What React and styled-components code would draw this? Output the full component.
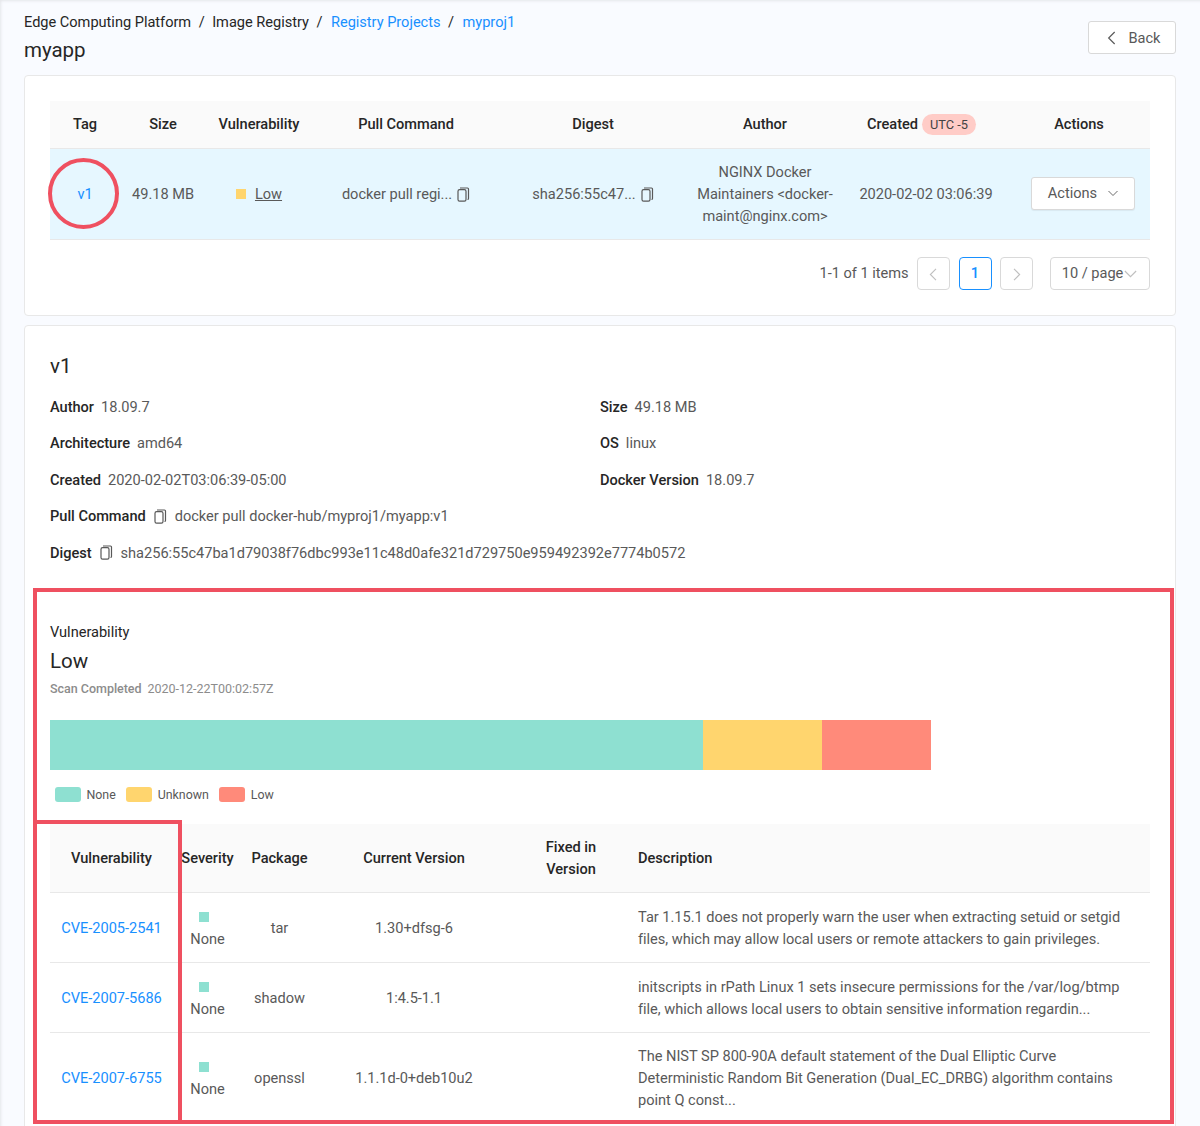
import React from "react";
import styled, { createGlobalStyle, css } from "styled-components";

const GlobalStyle = createGlobalStyle`
  html, body {
    margin: 0;
    padding: 0;
    height: 1126px;
    overflow: hidden;
    background: #f9fbff;
  }
  * { box-sizing: border-box; }
`;

const Page = styled.div`
  width: 1200px;
  height: 1126px;
  overflow: hidden;
  padding: 12px 24px 0;
  font-family: Roboto, "Liberation Sans", sans-serif;
  font-size: 14.6px;
  letter-spacing: -0.02px;
  color: #595959;
  background: #f9fbff;
  box-shadow: inset 2px 2px 3px -1px #e4e6ea;
`;

const Header = styled.div`
  display: flex;
  justify-content: space-between;
  height: 63px;
`;

const Crumbs = styled.div`
  display: flex;
  align-items: center;
  height: 20px;
  color: #262626;
`;

const Crumb = styled.span`
  color: ${(p) => (p.$link ? "#1890ff" : "#262626")};
  margin-left: ${(p) => (p.$link ? "1px" : "0")};
`;

const Slash = styled.span`
  margin: 0 7.5px;
`;

const Title = styled.h1`
  margin: 4px 0 0;
  font-size: 20.5px;
  font-weight: 400;
  line-height: 28px;
  color: #262626;
`;

const outlined = css`
  display: flex;
  align-items: center;
  justify-content: center;
  background: #fff;
  border: 1px solid #d9d9d9;
  border-radius: 3px;
  font-family: inherit;
  font-size: 14.6px;
  letter-spacing: -0.02px;
  color: #595959;
  padding: 0;
`;

const BackButton = styled.button`
  ${outlined}
  width: 88px;
  height: 33px;
  margin-top: 9px;
  gap: 9px;
`;

const Card = styled.section`
  background: #fff;
  border: 1px solid #e8e8e8;
  border-radius: 4px;
`;

const TagsCard = styled(Card)`
  height: 241px;
  padding: 25px 25px 0;
  margin-bottom: 9px;
`;

const DetailCard = styled(Card)`
  padding: 25px 25px 0;
  height: 900px;
`;

const Table = styled.table`
  width: 100%;
  border-collapse: collapse;
  table-layout: fixed;
`;

const Th = styled.th`
  background: #fafafa;
  border-bottom: 1px solid #e8e8e8;
  color: #262626;
  font-weight: 500;
  text-align: ${(p) => p.$align || "center"};
  padding: ${(p) => p.$pad || "0"};
  height: ${(p) => p.$h || "47px"};
  line-height: 22px;
  white-space: nowrap;
  overflow: visible;
`;

const Td = styled.td`
  text-align: ${(p) => p.$align || "center"};
  padding: ${(p) => p.$pad || "0"};
  background: ${(p) => p.$bg || "transparent"};
  border-bottom: 1px solid #e8e8e8;
  height: ${(p) => p.$h || "auto"};
  line-height: 22px;
  vertical-align: middle;
`;

const HighlightTd = styled(Td).attrs({ $bg: "#e6f7ff", $pad: "1px 0 0" })``;

const TagCell = styled.div`
  position: relative;
`;

const TagCircle = styled.div`
  position: absolute;
  left: -2px;
  top: -25px;
  width: 71px;
  height: 71px;
  border: 4px solid #ef5060;
  border-radius: 50%;
  pointer-events: none;
`;

const Link = styled.span`
  color: #1890ff;
`;

const UtcBadge = styled.span`
  display: inline-block;
  margin-left: 4px;
  padding: 0 8px;
  height: 21px;
  line-height: 21px;
  border-radius: 11px;
  background: #ffccc7;
  color: #434343;
  font-size: 12.8px;
  font-weight: 400;
`;

const Severity = styled.span`
  display: inline-flex;
  align-items: center;
  gap: 9px;
`;

const Square = styled.span`
  display: block;
  width: 10px;
  height: 10px;
  background: ${(p) => p.$color};
`;

const Underlined = styled.span`
  text-decoration: underline;
`;

const Copyable = styled.span`
  display: inline-flex;
  align-items: center;
  justify-content: center;
  gap: 5px;
`;

const ActionsButton = styled.button`
  ${outlined}
  width: 104px;
  height: 33px;
  margin: 0 auto;
  padding: 0 0 0 1px;
  gap: 10px;
  box-shadow: 0 1px 1px rgba(0, 0, 0, 0.06);
  transform: translate(4px, -1px);
`;

const Pager = styled.div`
  display: flex;
  justify-content: flex-end;
  align-items: center;
  margin-top: 17px;
  height: 33px;
`;

const PagerTotal = styled.span`
  margin-right: 8.5px;
`;

const PageBox = styled.button`
  ${outlined}
  width: 33px;
  height: 33px;
  margin-right: 8.5px;
  border-radius: 4px;
  color: #bfbfbf;
  svg {
    margin-top: 2px;
  }
  ${(p) =>
    p.$active &&
    css`
      border-color: #1890ff;
      color: #1890ff;
      font-weight: 500;
    `}
`;

const SizeSelect = styled.div`
  ${outlined}
  width: 100px;
  height: 33px;
  margin-left: 8.5px;
  border-radius: 4px;
`;

const DetailTitle = styled.h2`
  margin: 1px 0 16px;
  font-size: 20.5px;
  line-height: 28px;
  font-weight: 400;
  color: #262626;
`;

const InfoGrid = styled.div`
  display: grid;
  grid-template-columns: 550px 1fr;
  row-gap: 15px;
`;

const InfoRow = styled.div`
  display: flex;
  align-items: center;
  height: 21.5px;
  grid-column: ${(p) => (p.$wide ? "1 / -1" : "auto")};
  gap: ${(p) => (p.$wide ? "8px" : "7px")};
`;

const InfoLabel = styled.span`
  color: #262626;
  font-weight: 500;
`;

const VulnSection = styled.div`
  position: relative;
  margin-top: 27px;
  padding-top: 30px;
`;

const VulnFrame = styled.div`
  position: absolute;
  left: -17px;
  top: -3px;
  width: 1141px;
  height: 536px;
  border: 4px solid #ef5060;
  pointer-events: none;
`;

const ColumnFrame = styled.div`
  position: absolute;
  left: -17px;
  top: 229px;
  width: 149px;
  height: 304px;
  border: 4px solid #ef5060;
  pointer-events: none;
`;

const VulnLabel = styled.div`
  color: #262626;
  line-height: 22px;
`;

const VulnLevel = styled.div`
  margin-top: 4px;
  color: #262626;
  font-size: 20.5px;
  line-height: 28px;
`;

const ScanLine = styled.div`
  display: flex;
  gap: 6px;
  margin-top: 5px;
  font-size: 12.5px;
  line-height: 18px;
  color: #8c8c8c;
`;

const ScanLabel = styled.span`
  font-weight: 500;
`;

const Bar = styled.div`
  display: flex;
  width: 881px;
  height: 50px;
  margin-top: 22px;
`;

const BarPart = styled.div`
  background: ${(p) => p.$color};
`;

const Legend = styled.div`
  display: flex;
  align-items: center;
  height: 18px;
  margin: 16px 0 20px 5px;
  gap: 10.5px;
  font-size: 12.4px;
  color: #595959;
`;

const LegendItem = styled.span`
  display: flex;
  align-items: center;
  gap: 5.5px;
`;

const Swatch = styled.span`
  width: 26px;
  height: 15px;
  border-radius: 3px;
  background: ${(p) => p.$color};
`;

const SeverityStack = styled.div`
  display: flex;
  flex-direction: column;
  align-items: center;
`;

const SeverityMark = styled(Square)`
  margin: 6px 8px 6px 0;
`;

const Chevron = ({ dir = "down", size = 12, color = "#595959" }) => {
  const d = {
    down: "M1.5 4l4.5 4.5L10.5 4",
    left: "M8 1.5L3.5 6 8 10.5",
    right: "M4 1.5L8.5 6 4 10.5",
  }[dir];
  return (
    <svg width={size} height={size} viewBox="0 0 12 12" fill="none" stroke={color} strokeWidth="0.9">
      <path d={d} />
    </svg>
  );
};

const CopyIcon = () => (
  <svg width="13" height="15" viewBox="0 0 13 15" fill="none" stroke="#595959" strokeWidth="1.2">
    <path d="M3 1h7.5a1 1 0 0 1 1 1v9.5a1 1 0 0 1-1 1" />
    <rect x="1" y="2.6" width="8" height="11.6" rx="1.6" />
  </svg>
);

const COLORS = { none: "#8ee0d1", unknown: "#ffd56e", low: "#ff8a7a" };

const tagCols = [70, 86, 106, 188, 186, 158, 164, 142];
const vulnCols = [123, 69, 75, 194, 120, 519];

const vulns = [
  {
    id: "CVE-2005-2541",
    pkg: "tar",
    version: "1.30+dfsg-6",
    h: "70px",
    desc: "Tar 1.15.1 does not properly warn the user when extracting setuid or setgid files, which may allow local users or remote attackers to gain privileges.",
  },
  {
    id: "CVE-2007-5686",
    pkg: "shadow",
    version: "1:4.5-1.1",
    h: "70px",
    desc: "initscripts in rPath Linux 1 sets insecure permissions for the /var/log/btmp file, which allows local users to obtain sensitive information regardin...",
  },
  {
    id: "CVE-2007-6755",
    pkg: "openssl",
    version: "1.1.1d-0+deb10u2",
    h: "90px",
    desc: "The NIST SP 800-90A default statement of the Dual Elliptic Curve Deterministic Random Bit Generation (Dual_EC_DRBG) algorithm contains point Q const...",
  },
];

const Colgroup = ({ widths }) => (
  <colgroup>
    {widths.map((w, i) => (
      <col key={i} style={{ width: w }} />
    ))}
  </colgroup>
);

export default function App() {
  return (
    <Page>
      <GlobalStyle />
      <Header>
        <div>
          <Crumbs>
            <Crumb>Edge Computing Platform</Crumb>
            <Slash>/</Slash>
            <Crumb>Image Registry</Crumb>
            <Slash>/</Slash>
            <Crumb $link>Registry Projects</Crumb>
            <Slash>/</Slash>
            <Crumb $link>myproj1</Crumb>
          </Crumbs>
          <Title>myapp</Title>
        </div>
        <BackButton>
          <Chevron dir="left" size={16} />
          Back
        </BackButton>
      </Header>

      <TagsCard>
        <Table>
          <Colgroup widths={tagCols} />
          <thead>
            <tr>
              <Th>Tag</Th>
              <Th>Size</Th>
              <Th>Vulnerability</Th>
              <Th>Pull Command</Th>
              <Th>Digest</Th>
              <Th>Author</Th>
              <Th $pad="0 9px 0 0">
                Created<UtcBadge>UTC -5</UtcBadge>
              </Th>
              <Th>Actions</Th>
            </tr>
          </thead>
          <tbody>
            <tr>
              <HighlightTd $h="91px">
                <TagCell>
                  <Link>v1</Link>
                  <TagCircle />
                </TagCell>
              </HighlightTd>
              <HighlightTd>49.18 MB</HighlightTd>
              <HighlightTd>
                <Severity>
                  <Square $color={COLORS.unknown} />
                  <Underlined>Low</Underlined>
                </Severity>
              </HighlightTd>
              <HighlightTd>
                <Copyable>
                  docker pull regi...
                  <CopyIcon />
                </Copyable>
              </HighlightTd>
              <HighlightTd>
                <Copyable>
                  sha256:55c47...
                  <CopyIcon />
                </Copyable>
              </HighlightTd>
              <HighlightTd>
                NGINX Docker
                <br />
                Maintainers &lt;docker-
                <br />
                maint@nginx.com&gt;
              </HighlightTd>
              <HighlightTd>2020-02-02 03:06:39</HighlightTd>
              <HighlightTd>
                <ActionsButton>
                  Actions
                  <Chevron />
                </ActionsButton>
              </HighlightTd>
            </tr>
          </tbody>
        </Table>
        <Pager>
          <PagerTotal>1-1 of 1 items</PagerTotal>
          <PageBox>
            <Chevron dir="left" size={15} color="#bfbfbf" />
          </PageBox>
          <PageBox $active>1</PageBox>
          <PageBox>
            <Chevron dir="right" size={15} color="#bfbfbf" />
          </PageBox>
          <SizeSelect>
            10 / page
            <Chevron size={15} color="#bfbfbf" />
          </SizeSelect>
        </Pager>
      </TagsCard>

      <DetailCard>
        <DetailTitle>v1</DetailTitle>
        <InfoGrid>
          <InfoRow>
            <InfoLabel>Author</InfoLabel>18.09.7
          </InfoRow>
          <InfoRow>
            <InfoLabel>Size</InfoLabel>49.18 MB
          </InfoRow>
          <InfoRow>
            <InfoLabel>Architecture</InfoLabel>amd64
          </InfoRow>
          <InfoRow>
            <InfoLabel>OS</InfoLabel>linux
          </InfoRow>
          <InfoRow>
            <InfoLabel>Created</InfoLabel>2020-02-02T03:06:39-05:00
          </InfoRow>
          <InfoRow>
            <InfoLabel>Docker Version</InfoLabel>18.09.7
          </InfoRow>
          <InfoRow $wide>
            <InfoLabel>Pull Command</InfoLabel>
            <CopyIcon />
            docker pull docker-hub/myproj1/myapp:v1
          </InfoRow>
          <InfoRow $wide>
            <InfoLabel>Digest</InfoLabel>
            <CopyIcon />
            sha256:55c47ba1d79038f76dbc993e11c48d0afe321d729750e959492392e7774b0572
          </InfoRow>
        </InfoGrid>

        <VulnSection>
          <VulnFrame />
          <ColumnFrame />
          <VulnLabel>Vulnerability</VulnLabel>
          <VulnLevel>Low</VulnLevel>
          <ScanLine>
            <ScanLabel>Scan Completed</ScanLabel>
            2020-12-22T00:02:57Z
          </ScanLine>
          <Bar>
            <BarPart $color={COLORS.none} style={{ width: 653 }} />
            <BarPart $color={COLORS.unknown} style={{ width: 119 }} />
            <BarPart $color={COLORS.low} style={{ width: 109 }} />
          </Bar>
          <Legend>
            <LegendItem>
              <Swatch $color={COLORS.none} />
              None
            </LegendItem>
            <LegendItem>
              <Swatch $color={COLORS.unknown} />
              Unknown
            </LegendItem>
            <LegendItem>
              <Swatch $color={COLORS.low} />
              Low
            </LegendItem>
          </Legend>
          <Table>
            <Colgroup widths={vulnCols} />
            <thead>
              <tr>
                <Th $h="69px">Vulnerability</Th>
                <Th $h="69px">Severity</Th>
                <Th $h="69px">Package</Th>
                <Th $h="69px">Current Version</Th>
                <Th $h="69px">
                  Fixed in
                  <br />
                  Version
                </Th>
                <Th $h="69px" $align="left" $pad="0 0 0 7px">
                  Description
                </Th>
              </tr>
            </thead>
            <tbody>
              {vulns.map((v) => (
                <tr key={v.id}>
                  <Td $h={v.h}>
                    <Link>{v.id}</Link>
                  </Td>
                  <Td>
                    <SeverityStack>
                      <SeverityMark $color={COLORS.none} />
                      None
                    </SeverityStack>
                  </Td>
                  <Td>{v.pkg}</Td>
                  <Td>{v.version}</Td>
                  <Td />
                  <Td $align="left" $pad="0 20px 0 7px">
                    {v.desc}
                  </Td>
                </tr>
              ))}
            </tbody>
          </Table>
        </VulnSection>
      </DetailCard>
    </Page>
  );
}
